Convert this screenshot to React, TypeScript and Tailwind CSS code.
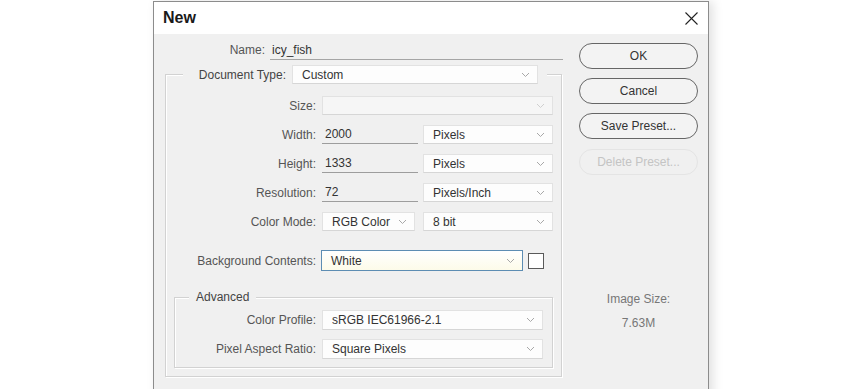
const font = { fontFamily: '"Liberation Sans", Arial, sans-serif' };

const Chevron = ({ light }: { light?: boolean }) => (
  <svg width="9" height="6" viewBox="0 0 9 6" className="shrink-0">
    <path d="M1 1 L4.5 4.5 L8 1" fill="none" stroke={light ? '#d0d0d0' : '#a8a8a8'} strokeWidth="1" />
  </svg>
);

const Select = ({
  value,
  width,
  height = 'h-[19px]',
  disabled,
}: {
  value: string;
  width: string;
  height?: string;
  disabled?: boolean;
}) => (
  <div
    className={`${width} ${height} flex items-center justify-between pl-[9px] pr-[7px] border border-[#e2e2e2] border-b-[#d6d6d6] ${
      disabled ? 'bg-[#f6f6f6]' : 'bg-[#fdfdfd]'
    } text-[#333]`}
  >
    <span>{value}</span>
    <Chevron light={disabled} />
  </div>
);

const TextInput = ({ value }: { value: string }) => (
  <div className="w-[96px] h-[19px] flex items-center pl-[3px] border-b border-[#9d9d9d] text-[#333]">{value}</div>
);

const Row = ({ label, children, mt }: { label: string; children: React.ReactNode; mt: string }) => (
  <div className={`flex items-center ${mt}`}>
    <div className="w-[150px] text-right text-[#555]">{label}</div>
    <div className="ml-[6px] flex items-center gap-[5px]">{children}</div>
  </div>
);

const Button = ({ label, disabled, mt }: { label: string; disabled?: boolean; mt: string }) => (
  <div
    className={`${mt} w-[119px] h-[26px] rounded-full flex items-center justify-center border ${
      disabled ? 'border-[#e4e4e4] text-[#c4c4c4]' : 'border-[#666] text-[#333] bg-[#f3f3f3]'
    }`}
  >
    {label}
  </div>
);

export default function App() {
  return (
    <div className="w-[850px] h-[389px] bg-white overflow-hidden text-[12px]" style={font}>
      <div className="pl-[153px] pt-[1px]">
        <div className="w-[556px] h-[420px] border border-[#8c8c8c] bg-[#f0f0f0] shadow-[4px_0_10px_rgba(0,0,0,0.12)]">
          {/* title bar */}
          <div className="h-[32px] bg-white flex items-center justify-between pl-[9px] pr-[10px]">
            <span className="text-[16px] font-bold text-[#1a1a1a]">New</span>
            <svg width="13" height="13" viewBox="0 0 13 13">
              <path d="M0.5 0.5 L12.5 12.5 M12.5 0.5 L0.5 12.5" stroke="#222" strokeWidth="1.1" fill="none" />
            </svg>
          </div>

          <div className="flex">
            {/* form */}
            <div className="w-[410px]">
              <div className="flex items-center mt-[6px] h-[20px]">
                <div className="w-[111px] text-right text-[#555]">Name:</div>
                <div className="ml-[5px] w-[293px] h-[20px] flex items-center pl-[2px] border-b border-[#a5a5a5] text-[#333]">
                  icy_fish
                </div>
              </div>

              <div className="mt-[14px] ml-[11px] w-[397px] h-[303px] border border-[#d2d2d2] shadow-[inset_1px_1px_0_#fff,1px_1px_0_#fff]">
                <div className="-mt-[10px] ml-[17px] w-[364px] flex items-center bg-[#f0f0f0]">
                  <div className="w-[103px] text-right text-[#444]">Document Type:</div>
                  <div className="ml-[6px]">
                    <Select value="Custom" width="w-[246px]" />
                  </div>
                </div>

                <Row label="Size:" mt="mt-[12px]">
                  <Select value="" width="w-[231px]" disabled />
                </Row>
                <Row label="Width:" mt="mt-[10px]">
                  <TextInput value="2000" />
                  <Select value="Pixels" width="w-[130px]" />
                </Row>
                <Row label="Height:" mt="mt-[10px]">
                  <TextInput value="1333" />
                  <Select value="Pixels" width="w-[130px]" />
                </Row>
                <Row label="Resolution:" mt="mt-[10px]">
                  <TextInput value="72" />
                  <Select value="Pixels/Inch" width="w-[130px]" />
                </Row>
                <div className="flex items-center mt-[10px]">
                  <div className="w-[150px] text-right text-[#555]">Color Mode:</div>
                  <div className="ml-[6px] flex items-center gap-[8px]">
                    <Select value="RGB Color" width="w-[93px]" />
                    <Select value="8 bit" width="w-[130px]" />
                  </div>
                </div>

                <div className="flex items-center mt-[19px]">
                  <div className="w-[150px] text-right text-[#555]">Background Contents:</div>
                  <div className="ml-[5px] flex items-center gap-[5px]">
                    <div className="w-[202px] h-[21px] flex items-center justify-between pl-[9px] pr-[7px] border border-[#5d8db3] bg-gradient-to-b from-white to-[#fdfbe9] text-[#333]">
                      <span>White</span>
                      <Chevron />
                    </div>
                    <div className="w-[16px] h-[16px] border border-[#5a5a5a] bg-white" />
                  </div>
                </div>

                <div className="mt-[26px] ml-[8px] w-[379px] h-[71px] border border-[#d2d2d2] shadow-[inset_1px_1px_0_#fff,1px_1px_0_#fff]">
                  <div className="-mt-[9px] ml-[14px] h-[16px] w-fit px-[7px] flex items-center bg-[#f0f0f0] text-[#444]">
                    Advanced
                  </div>
                  <div className="flex items-center mt-[5px]">
                    <div className="w-[141px] text-right text-[#555]">Color Profile:</div>
                    <div className="ml-[6px]">
                      <Select value="sRGB IEC61966-2.1" width="w-[221px]" height="h-[20px]" />
                    </div>
                  </div>
                  <div className="flex items-center mt-[9px]">
                    <div className="w-[141px] text-right text-[#555]">Pixel Aspect Ratio:</div>
                    <div className="ml-[6px]">
                      <Select value="Square Pixels" width="w-[221px]" height="h-[20px]" />
                    </div>
                  </div>
                </div>
              </div>
            </div>

            {/* buttons */}
            <div className="ml-[15px] flex flex-col">
              <Button label="OK" mt="mt-[9px]" />
              <Button label="Cancel" mt="mt-[9px]" />
              <Button label="Save Preset..." mt="mt-[9px]" />
              <Button label="Delete Preset..." mt="mt-[10px]" disabled />
              <div className="mt-[116px] text-center text-[#777] leading-[16px]">Image Size:</div>
              <div className="mt-[8px] text-center text-[#777] leading-[16px]">7.63M</div>
            </div>
          </div>
        </div>
      </div>
    </div>
  );
}
